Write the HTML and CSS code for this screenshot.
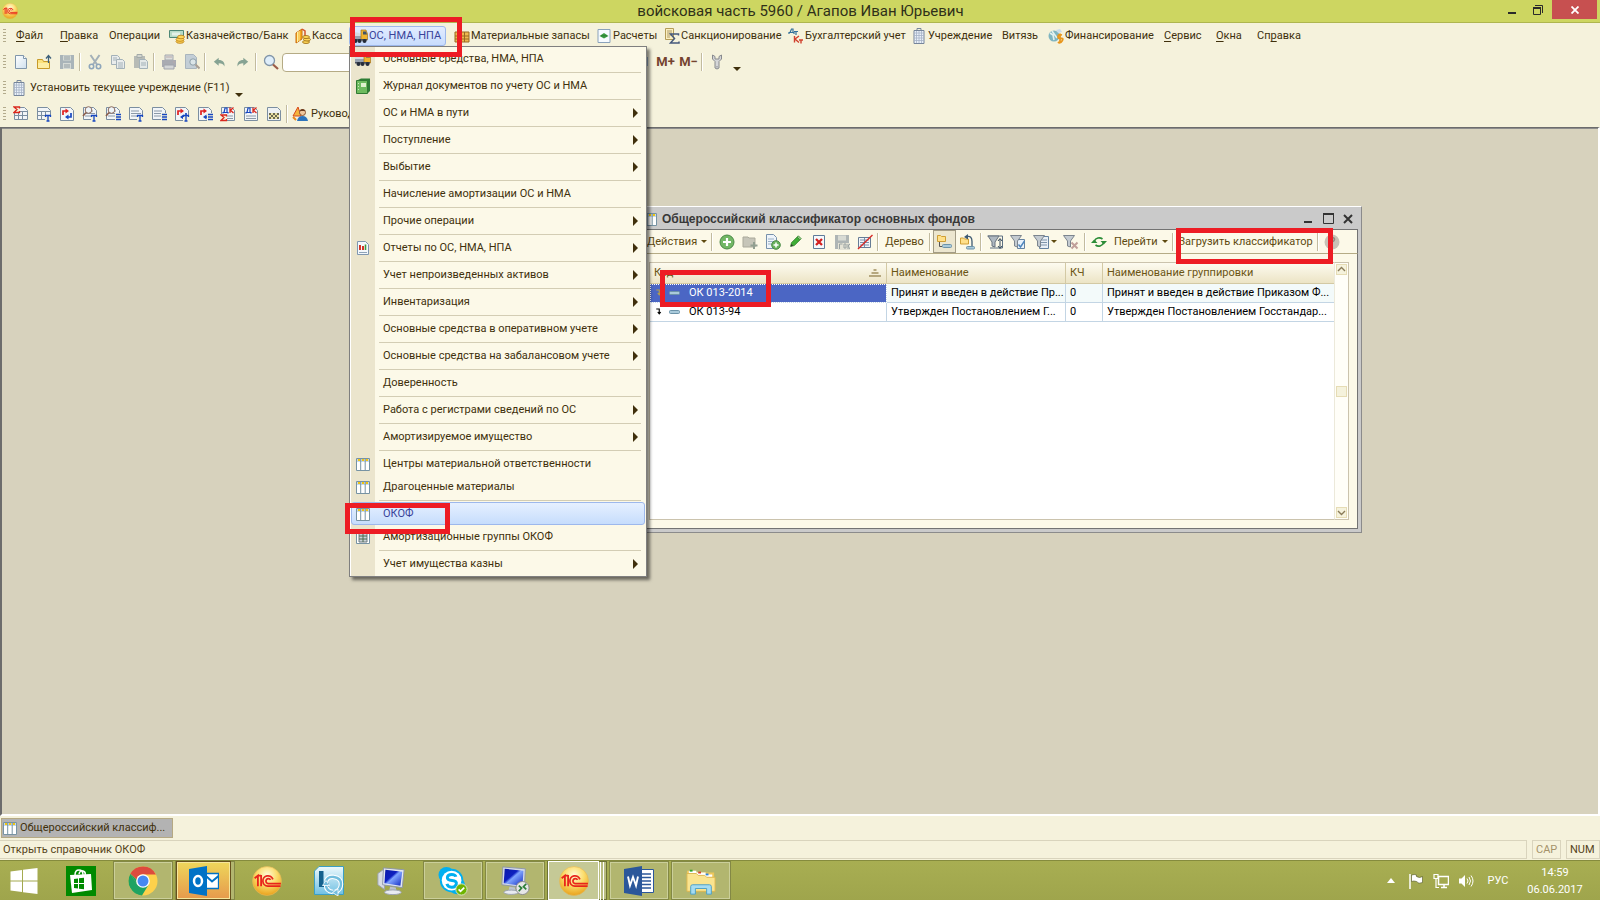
FILE: index.html
```html
<!DOCTYPE html>
<html lang="ru">
<head>
<meta charset="utf-8">
<title>войсковая часть 5960 / Агапов Иван Юрьевич</title>
<link rel="stylesheet" href="styles.css">
</head>
<body>
<svg class="sprite" aria-hidden="true">
  <defs>
    <radialGradient id="gold" cx=".5" cy=".3" r=".7"><stop offset="0" stop-color="#fffbd8"/><stop offset=".5" stop-color="#fbdc6a"/><stop offset="1" stop-color="#e9a21c"/></radialGradient>
    <linearGradient id="screen" x1="0" y1="0" x2="1" y2="1"><stop offset="0" stop-color="#0a1aa8"/><stop offset=".4" stop-color="#0d1fc0"/><stop offset=".5" stop-color="#7fa4ff"/><stop offset="1" stop-color="#1028c0"/></linearGradient>
    <linearGradient id="paper" x1="0" y1="0" x2="1" y2="1"><stop offset="0" stop-color="#fff"/><stop offset="1" stop-color="#cfe0ee"/></linearGradient>
    <linearGradient id="lyncbg" x1="0" y1="0" x2="0" y2="1"><stop offset="0" stop-color="#eef9fd"/><stop offset="1" stop-color="#6fc0e2"/></linearGradient>
  </defs>
  <symbol id="onec" viewBox="0 0 28 28"><circle cx="14" cy="14" r="13.5" fill="url(#gold)" stroke="#e3b95a" stroke-width=".6"/><path d="M2.500 11.500l3-2.500v10M8.500 8.500v10.500M5.500 9h3" fill="none" stroke="#e8251c" stroke-width="1.700"/><path d="M19.500 12.500a4.800 4.800 0 1 0-4.800 6.300h12M17.300 13a2.300 2.300 0 1 0-2.300 3.400h12" fill="none" stroke="#e8251c" stroke-width="1.600"/></symbol>
  <symbol id="new" viewBox="0 0 16 16"><path d="M2.500 1.500h8l3 3v10h-11z" fill="url(#paper)" stroke="#8096ab"/><path d="M10.500 1.500v3h3" fill="#fff" stroke="#8096ab"/></symbol>
  <symbol id="open" viewBox="0 0 16 16"><path d="M1.500 14.500v-9h5l1 2h6v7z" fill="#fbe27c" stroke="#c79a2a"/><path d="M2 9h11v5H2z" fill="#fdeea4"/><path d="M12.500 9V2M10 4.500L12.500 1.500 15 4.500" fill="none" stroke="#3d607b" stroke-width="1.300"/></symbol>
  <symbol id="save" viewBox="0 0 16 16"><path d="M1 1h14v14H1z" fill="#a9b4b9"/><path d="M4 1.500h8v5H4zM4 9h8v6H4z" fill="#d5dad6"/><path d="M5 3h6M5 5h6M5 11h6M5 13h6" stroke="#929da3"/></symbol>
  <symbol id="saveok" viewBox="0 0 16 16"><path d="M1 1h14v14H1z" fill="#aeb5b5"/><path d="M4 1.500h8v5H4z" fill="#d8dbd4"/><path d="M4 9h12v7H4z" fill="#e4e3d6"/><path d="M5.500 15V10h3M10 10h2v4h-2zM14 10v5M16 10l-2 2 2 3" fill="none" stroke="#9aa3a3"/></symbol>
  <symbol id="cut" viewBox="0 0 16 16"><path d="M3.500 1l6.500 9.500M12.500 1L6 10.500" stroke="#a3b0b8" stroke-width="2"/><circle cx="4.500" cy="12.500" r="2.200" fill="none" stroke="#8ea6bb" stroke-width="1.600"/><circle cx="11.500" cy="12.500" r="2.200" fill="none" stroke="#8ea6bb" stroke-width="1.600"/></symbol>
  <symbol id="copy" viewBox="0 0 16 16"><g fill="#e9ecec" stroke="#a3b1b8"><path d="M1.500 1.500h6l2 2v7h-8z"/><path d="M6.500 5.500h6l2 2v7h-8z"/></g><path d="M3 4h4M3 6h3M8 9h5M8 11h5M8 13h5" stroke="#a3b1b8"/></symbol>
  <symbol id="paste" viewBox="0 0 16 16"><path d="M1 2h11v12H1z" fill="#b7bbb6"/><path d="M4 .500h5v3H4z" fill="#d2d5cf" stroke="#a3aaa9"/><path d="M6.500 5.500h6l2 2v7h-8z" fill="#e3e8e8" stroke="#a3b1b8"/><path d="M8 9h5M8 11h5" stroke="#a3b1b8"/></symbol>
  <symbol id="print" viewBox="0 0 16 16"><path d="M4 1h8v5H4z" fill="#dcdedc" stroke="#a4a8ae"/><path d="M1 6h14v7H1z" fill="#a9abb2"/><path d="M3 11h10v4H3z" fill="#d3d5d6" stroke="#a0a3ab"/><path d="M5 3h6M12 8h2" stroke="#b9a9aa"/></symbol>
  <symbol id="preview" viewBox="0 0 16 16"><path d="M1.500 .500h8l3 3v11h-11z" fill="#c3ced6" stroke="#a9b5bd"/><circle cx="9" cy="8" r="3.200" fill="#dbe5e8" stroke="#8fa0aa"/><path d="M11.500 10.500l4 4" stroke="#aa9f93" stroke-width="2"/></symbol>
  <symbol id="undo" viewBox="0 0 16 16"><path d="M1 7l6-5v3c5 0 8 3 7 8-1-3-3-4-7-4v3z" fill="#86a393"/></symbol>
  <symbol id="redo" viewBox="0 0 16 16"><path d="M15 7L9 2v3C4 5 1 8 2 13c1-3 3-4 7-4v3z" fill="#86a393"/></symbol>
  <symbol id="find" viewBox="0 0 16 16"><circle cx="6.500" cy="6.500" r="5" fill="#dfeefa" stroke="#8195a8" stroke-width="1.300"/><path d="M10 10.500l5 4.500" stroke="#9b5c48" stroke-width="2.200"/></symbol>
  <symbol id="wrench" viewBox="0 0 16 16"><path d="M3.500 1v4l2.500 2.500V14q2 2 4 0V7.500L12.500 5V1L10 2.500V5H6V2.500z" fill="#d5d6d8" stroke="#888a8e"/><path d="M8 12v1.500" stroke="#888a8e"/></symbol>
  <symbol id="building" viewBox="0 0 16 16"><path d="M3 2.500h10v13H3z" fill="#e9f0f8" stroke="#76859b"/><path d="M6 2.500v-2h4v2" fill="none" stroke="#76859b"/><path d="M3 5h10M3 7.500h10M3 10h10M3 12.500h10M5.500 3v12M8 3v12M10.500 3v12" stroke="#a6b3c7" stroke-width=".8"/></symbol>
  <symbol id="sheet" viewBox="0 0 16 16"><path d="M1.500 1.500h10l3 3v9h-13z" fill="#f2f5f8" stroke="#7b8ea1"/><path d="M3 5h8M3 7.500h10M3 10h10" stroke="#8b99a8"/></symbol>
  <symbol id="gridsheet" viewBox="0 0 16 16"><path d="M1.500 1.500h10l3 3v9h-13z" fill="#f2f5f8" stroke="#7b8ea1"/><path d="M2 5.500h12M2 9.500h12M5.500 5v8M9.500 5v8" stroke="#7b8ea1"/></symbol>
  <symbol id="tmark" viewBox="0 0 16 16"><path d="M9 9h7v7H9z" fill="#f5f2dc"/><path d="M9 9.500h6M12 9v6M10.500 15h3M9.500 9v2M14.500 9v2" stroke="#1747c0" stroke-width="1.300"/></symbol>
  <symbol id="lmark" viewBox="0 0 16 16"><path d="M10 7h6v9h-6z" fill="#f5f2dc"/><path d="M11 8.500h5M11 11h5M11 13.500h5" stroke="#1747c0" stroke-width="1.300"/></symbol>
  <symbol id="rep1" viewBox="0 0 16 16"><use href="#gridsheet"/><path d="M0 0h7v7H0z" fill="#f5f2dc"/><path d="M6.500 2.500V1H1l3 2.500L1 6.500h5.500V5" fill="none" stroke="#d9281e" stroke-width="1.300"/></symbol>
  <symbol id="rep2" viewBox="0 0 16 16"><use href="#gridsheet"/><use href="#tmark"/></symbol>
  <symbol id="rep3" viewBox="0 0 16 16"><path d="M1.500 1.500h10l3 3v10h-13z" fill="#f2f5f8" stroke="#7b8ea1"/><path d="M4 9V5h3" fill="none" stroke="#e02020" stroke-width="1.700"/><path d="M6.500 2.500L10 5 6.500 7.500z" fill="#e02020"/><path d="M12 7v4H9" fill="none" stroke="#1747c0" stroke-width="1.700"/><path d="M9.500 8.500L6 11l3.500 2.500z" fill="#1747c0"/></symbol>
  <symbol id="rep4" viewBox="0 0 16 16"><use href="#sheet"/><circle cx="6.500" cy="4" r="3.300" fill="#eef4f8" stroke="#8b6a5c"/><path d="M4 6.500L1 10" stroke="#8b5c48" stroke-width="1.600"/><use href="#tmark"/></symbol>
  <symbol id="rep5" viewBox="0 0 16 16"><use href="#sheet"/><circle cx="6.500" cy="4" r="3.300" fill="#eef4f8" stroke="#8b6a5c"/><path d="M4 6.500L1 10" stroke="#8b5c48" stroke-width="1.600"/><use href="#lmark"/></symbol>
  <symbol id="rep6" viewBox="0 0 16 16"><use href="#sheet"/><use href="#tmark"/></symbol>
  <symbol id="rep7" viewBox="0 0 16 16"><use href="#sheet"/><use href="#lmark"/></symbol>
  <symbol id="rep8" viewBox="0 0 16 16"><use href="#rep3"/><use href="#tmark"/></symbol>
  <symbol id="rep9" viewBox="0 0 16 16"><use href="#rep3"/><use href="#lmark"/></symbol>
  <symbol id="dk" viewBox="0 0 16 16"><path d="M1.500 1.500h10l3 3v10h-13z" fill="#f2f5f8" stroke="#7b8ea1"/><path d="M3 10h10M3 12.500h10" stroke="#8b99a8"/><path d="M3 7.500V6.500h5v1M4 6.500L5 2h2v4.500" fill="none" stroke="#1747c0" stroke-width="1.200"/><path d="M10 1.500v5.500M13.500 1.500L10.500 4.300 13.500 7" fill="none" stroke="#d9281e" stroke-width="1.300"/></symbol>
  <symbol id="dksum" viewBox="0 0 16 16"><use href="#dk"/><path d="M0 8h7v8H0z" fill="#f5f2dc"/><path d="M6.500 10.500V9H1l3 2.500-3 3h5.500V13" fill="none" stroke="#d9281e" stroke-width="1.300"/></symbol>
  <symbol id="chess" viewBox="0 0 16 16"><path d="M1.500 1.500h10l3 3v10h-13z" fill="#eef1f3" stroke="#7b8ea1"/><path d="M3 7h10v6H3z" fill="#e9dfa0"/><path d="M3 7h2v2H3zM7 7h2v2H7zM11 7h2v2h-2zM5 9h2v2H5zM9 9h2v2H9zM3 11h2v2H3zM7 11h2v2H7zM11 11h2v2h-2z" fill="#6c6a52"/></symbol>
  <symbol id="guide" viewBox="0 0 16 16"><path d="M1 10L6 1l3 9z" fill="#f4b43c" stroke="#d8481d"/><circle cx="10.500" cy="6.500" r="3" fill="#f2c79c" stroke="#8a5430"/><path d="M7.500 5q3-4 6 0z" fill="#6c3b1d"/><path d="M5 15q1-5 5.500-5t5.500 5z" fill="#2d74bd"/><path d="M1 11l3 3" stroke="#e88a1c" stroke-width="2"/></symbol>
  <symbol id="bank" viewBox="0 0 16 16"><path d="M.500 2.500h14v7H.500z" fill="#b8dbc8" stroke="#4e8876"/><path d="M3 4.500h8v3H3z" fill="#e4f2e8"/><g fill="#ffd75a" stroke="#b87a12" stroke-width=".8"><ellipse cx="11" cy="13.500" rx="4" ry="1.800"/><ellipse cx="11" cy="11.500" rx="4" ry="1.800"/><ellipse cx="12" cy="9" rx="3.500" ry="1.800"/></g></symbol>
  <symbol id="cash" viewBox="0 0 16 16"><path d="M1 5l6-4v10l-6 4z" fill="#f6a91c" stroke="#c96c10"/><path d="M4 3v10M2.500 4v10" stroke="#fff0a0"/><path d="M7 1l3 2v6" fill="none" stroke="#d4542a" stroke-width="1.500"/><g fill="#ffd75a" stroke="#96660f" stroke-width=".8"><ellipse cx="11" cy="14" rx="3.500" ry="1.500"/><ellipse cx="12" cy="11.500" rx="3.500" ry="1.500"/><ellipse cx="11" cy="9" rx="3.500" ry="1.500"/></g></symbol>
  <symbol id="truck" viewBox="0 0 16 16"><path d="M0 6h9v5H0z" fill="#98a2b0"/><path d="M0 5q4-2 9 1v2H0z" fill="#d3dae2"/><path d="M9 2h5l1.500 4v6H9z" fill="#efb330" stroke="#a8741a" stroke-width=".7"/><path d="M11 3.500h3l1 3h-4z" fill="#41536a"/><path d="M0 11h15v1.500H0z" fill="#4b5160"/><g fill="#252c3a"><circle cx="3.500" cy="13" r="2"/><circle cx="7.500" cy="13" r="2"/><circle cx="12.500" cy="13" r="2"/></g></symbol>
  <symbol id="boxes" viewBox="0 0 16 16"><path d="M1 4h14v10H1z" fill="#edb850" stroke="#9b6820"/><path d="M1 8h14M1 11h14M5.500 4v10M10.500 4v10" stroke="#9b6820"/></symbol>
  <symbol id="settle" viewBox="0 0 16 16"><path d="M2 1.500h12v13H2z" fill="#f7fbff" stroke="#8aa2bb"/><path d="M3.500 8L8 5l4.500 3L8 10.500z" fill="#3a9d42"/><path d="M5 7.800h6" stroke="#2c7d36"/></symbol>
  <symbol id="sanction" viewBox="0 0 16 16"><path d="M1.500 .500h8v11h-8z" fill="#fbefbf" stroke="#b49c57"/><path d="M3 3h5M3 5h5M3 7h5M3 9h3" stroke="#ad9a6a"/><path d="M14.500 7.500V6H6.500l4 4.500-4 4.500h8.500V13.500" fill="none" stroke="#46597c" stroke-width="1.500"/></symbol>
  <symbol id="ledger" viewBox="0 0 16 16"><path d="M1 6V4.500h5V6M2 4.500L3.500 1h1.500v3.500M6 3.500h4M8 3.500v3.500" fill="none" stroke="#31709a" stroke-width="1.200"/><path d="M6.500 8v6.500M11 8l-4 3 4 3.500M11 12h4M13 12v3.500" fill="none" stroke="#d1402c" stroke-width="1.400"/></symbol>
  <symbol id="finance" viewBox="0 0 16 16"><circle cx="6" cy="8" r="5.500" fill="#7fb5c0"/><path d="M2 5l3 2 1 5M4 3l5 7" stroke="#e2f1ef" stroke-width="1.600" fill="none"/><path d="M8 2l4-1 2 3-4 1z" fill="#c8dceb"/><path d="M14 7q-4-1-4 1.500t3 2 1 2.500-4 1M12 5.500v10" fill="none" stroke="#e8961c" stroke-width="1.800"/></symbol>
  <symbol id="book" viewBox="0 0 16 16"><path d="M3 2l3-1.500h9V13l-2 2z" fill="#2d7d35"/><path d="M1.500 2.500h11v13h-11z" fill="#6dbb5f" stroke="#2f7a33"/><path d="M6 5h5v4H6z" fill="#dff2cf"/><path d="M3.500 5v9" stroke="#c9ebc0" stroke-dasharray="1 2"/></symbol>
  <symbol id="chart" viewBox="0 0 16 16"><path d="M2.500 1.500h8l3 3v10h-11z" fill="#f4f8fc" stroke="#7f97b0"/><path d="M5 5v5" stroke="#d53427" stroke-width="2"/><path d="M8 6v4" stroke="#d53427" stroke-width="2"/><path d="M10.500 4.500V10" stroke="#3f9b3f" stroke-width="1.600"/><path d="M4 12.500h8" stroke="#8fa3b8"/></symbol>
  <symbol id="table" viewBox="0 0 16 16"><path d="M1.500 2.500h13v12h-13z" fill="#fff" stroke="#7793a3"/><path d="M2 3h12v3H2z" fill="#c6d9ea"/><path d="M3 4h2M7 4h2M11 4h2" stroke="#f1c40f" stroke-width="2"/><path d="M5.700 3v12M10.200 3v12" stroke="#7793a3"/></symbol>
  <symbol id="groups" viewBox="0 0 16 16"><path d="M1.500 1.500h13v13h-13z" fill="#fff" stroke="#7793a3"/><path d="M4 4h8v9H4z" fill="#c9d2d6" stroke="#6d7b80"/><path d="M4 7h8M4 10h8M8 4v9" stroke="#4d6a50"/></symbol>
  <symbol id="add" viewBox="0 0 16 16"><circle cx="8" cy="8" r="7" fill="#72b765" stroke="#4b8a47"/><path d="M8 4v8M4 8h8" stroke="#fff" stroke-width="2.200"/></symbol>
  <symbol id="addfolder" viewBox="0 0 16 16"><path d="M1 3h5l1 1h6v9H1z" fill="#c6c5b9" stroke="#aaa99b"/><path d="M12 8v7M8.500 11.500h7" stroke="#929f91" stroke-width="2"/></symbol>
  <symbol id="addcopy" viewBox="0 0 16 16"><path d="M1.500 .500h7l3 3v11h-10z" fill="#eef4fa" stroke="#7791ab"/><path d="M3 5h6M3 7.500h6M3 10h4" stroke="#9ab0c5"/><circle cx="11" cy="11" r="4.300" fill="#69b25c" stroke="#4b8a47"/><path d="M11 8.500v5M8.500 11h5" stroke="#fff" stroke-width="1.500"/></symbol>
  <symbol id="pencil" viewBox="0 0 16 16"><path d="M2 14l1-4.500L10 2.500l3.500 3.500L6.500 13z" fill="#3fae35" stroke="#2c7f29"/><path d="M10 2.500L11.500 1 15 4.500 13.500 6z" fill="#9fcf8f" stroke="#2c7f29"/><path d="M2 14l1-3 2 2z" fill="#333"/></symbol>
  <symbol id="delete" viewBox="0 0 16 16"><path d="M2.500 1.500h11v13h-11z" fill="#f6f9fc" stroke="#5f7b99"/><path d="M5 5l6 6M11 5l-6 6" stroke="#d3201f" stroke-width="2.300"/></symbol>
  <symbol id="strike" viewBox="0 0 16 16"><path d="M1.500 3.500h12v10h-12z" fill="#f3f6f9" stroke="#667c95"/><path d="M3 6h9M3 8.500h9M3 11h9M7.500 4v9" stroke="#7b90a8"/><path d="M1 15L15.500 1" stroke="#d92b27" stroke-width="1.400"/></symbol>
  <symbol id="hier" viewBox="0 0 16 16"><path d="M1.500 1.500h3l1 1h4v5h-8z" fill="#ffe08a" stroke="#cf9f35"/><path d="M3.500 8v4.500H6" fill="none" stroke="#555"/><rect x="6.500" y="10.500" width="9" height="3" rx="1" fill="#a9cadb" stroke="#6c93a9"/></symbol>
  <symbol id="moveup" viewBox="0 0 16 16"><path d="M1.500 4h3l1 1h4v5h-8z" fill="#ffe08a" stroke="#cf9f35"/><path d="M8 2.500q5-1 5 5V12" fill="none" stroke="#3e5a72" stroke-width="1.300"/><path d="M9 0L5 3l4 2.500z" fill="#3e5a72"/><rect x="7.500" y="12.500" width="8" height="2.500" rx="1" fill="#a9cadb" stroke="#6c93a9"/></symbol>
  <symbol id="funnel" viewBox="0 0 16 16"><path d="M.500 1.500h11L7.500 7v6l-3-1V7z" fill="#c4cbd1" stroke="#7c858e"/></symbol>
  <symbol id="filt1" viewBox="0 0 16 16"><path d="M.500 2h15v12H3" fill="none" stroke="#5e7183"/><path d="M1 2h11L8 8v5l-3-1V8z" fill="#aeb8c1" stroke="#68737e"/><path d="M13 5v9M11 7l2-2.500L15 7M11 12l2 2.500L15 12" fill="none" stroke="#35495c"/></symbol>
  <symbol id="filt2" viewBox="0 0 16 16"><path d="M7.500 5.500h7v9h-7z" fill="#e8f1fb" stroke="#6683a0"/><use href="#funnel"/><path d="M8.500 10.500l2 2.500 4-6" fill="none" stroke="#4d86bd" stroke-width="1.400"/></symbol>
  <symbol id="filt3" viewBox="0 0 16 16"><path d="M6.500 2.500h9v12h-9z" fill="#eaf0f6" stroke="#6683a0"/><path d="M8 6h6M8 8.500h6M8 11h6" stroke="#7e94aa"/><use href="#funnel"/></symbol>
  <symbol id="filt4" viewBox="0 0 16 16"><use href="#funnel"/><path d="M8.500 8.500l6 6M14.500 8.500l-6 6" stroke="#c1a09a" stroke-width="2"/></symbol>
  <symbol id="refresh" viewBox="0 0 16 16"><path d="M3.500 7a5 4.500 0 0 1 8-2M12.500 9a5 4.500 0 0 1-8 2" fill="none" stroke="#2b8c37" stroke-width="1.600"/><path d="M9.500 7h6.500l-3.200 3.500zM0 9h6.500L3.200 5.500z" fill="#2b8c37"/></symbol>
  <symbol id="help" viewBox="0 0 16 16"><circle cx="8" cy="8" r="7.500" fill="#c8c2b6"/><path d="M5.500 6q0-2.500 2.500-2.500t2.500 2q0 1.500-2.500 2.500v1.500M8 11v1.800" fill="none" stroke="#918a7e" stroke-width="1.600"/></symbol>
  <symbol id="level" viewBox="0 0 16 16"><path d="M3 4h4v6M5 8l2 2.500L9 8" fill="none" stroke="currentColor" stroke-width="1.500"/></symbol>
  <symbol id="item" viewBox="0 0 12 6"><rect x=".5" y="1.500" width="10" height="3" rx="1" fill="#a9cadb" stroke="#6c93a9"/></symbol>
  <symbol id="up" viewBox="0 0 11 11"><path d="M2 7l3.500-3.500L9 7" fill="none" stroke="#8a7b58" stroke-width="1.400"/></symbol>
  <symbol id="down" viewBox="0 0 11 11"><path d="M2 4l3.500 3.500L9 4" fill="none" stroke="#8a7b58" stroke-width="1.400"/></symbol>
  <symbol id="sort" viewBox="0 0 12 8"><path d="M4.500 0h3v2h-3zM2.500 3h7v2h-7zM0 6h12v2H0z" fill="#b5a77e"/></symbol>
  <symbol id="win" viewBox="0 0 28 28"><path d="M.500 4.500L12 3v10.500H.500zM13 2.800L27.500 1v12.500H13zM.500 14.500H12V25L.500 23.500zM13 14.500h14.500V27L13 25.200z" fill="#fff"/></symbol>
  <symbol id="store" viewBox="0 0 30 30"><path d="M0 0h30v30H0z" fill="#008a00"/><path d="M4 9l21 -1 1 16-20 3z" fill="#fff"/><path d="M9 9q0-5 4-5t4 5M13 8q1-4 4-3 3 1 2 4" fill="none" stroke="#fff" stroke-width="1.500"/><path d="M8 13l4-.500V17H8zM13 12.300l5-.600V17h-5zM8 18h4v4.500L8 22zM13 18h5v5.300l-5-.600z" fill="#008a00"/></symbol>
  <symbol id="chrome" viewBox="0 0 30 30"><circle cx="15" cy="15" r="14.500" fill="#fdd14b"/><path d="M2.400 7.800A14.500 14.500 0 0 0 14 29.500L21 18 15 15l-6 3z" fill="#1ea362"/><path d="M2.400 7.800A14.500 14.500 0 0 1 27.900 8.500H15q-5 0-6.500 5z" fill="#dd4b3e"/><path d="M2.400 7.800L9 18.500l-.500-5z" fill="#1ea362"/><circle cx="15" cy="15" r="6.800" fill="#fff"/><circle cx="15" cy="15" r="5.500" fill="#4688f1"/></symbol>
  <symbol id="outlook" viewBox="0 0 30 30"><path d="M16.500 7.500h13v15h-13z" fill="#fff" stroke="#0072c6" stroke-width="1.300"/><path d="M17 10l6 5.500 6.500-5.500" fill="none" stroke="#0072c6" stroke-width="2"/><path d="M0 3l18-3v30L0 27z" fill="#0072c6"/><ellipse cx="9" cy="15" rx="4" ry="5" fill="none" stroke="#fff" stroke-width="2.500"/></symbol>
  <symbol id="lync" viewBox="0 0 30 30"><path d="M5 .500h24.500v28H.500V5z" fill="url(#lyncbg)" stroke="#3b9fc4"/><path d="M5 5h4.500v12H15v4H5z" fill="#15618d"/><path d="M12 15q2-5 8-4 7 1 7 7t-6 8M12 19q0 6 7 7" fill="none" stroke="#fff" stroke-width="4.500"/><path d="M12 15q2-5 8-4 7 1 7 7t-6 8M12 19q0 6 7 7" fill="none" stroke="#72bddd" stroke-width="2.400"/><path d="M8.500 19.500l3.500-5 3.500 5zM24 23l-5.500 3.500L24 30z" fill="#72bddd" stroke="#fff" stroke-width=".8"/></symbol>
  <symbol id="pc" viewBox="0 0 32 30"><path d="M2 7l7-5v22l-7-5z" fill="#d9dde4" stroke="#9aa1ad"/><path d="M8 1l22 2-2 19-21-3z" fill="#e3e7f0" stroke="#8c95a8"/><path d="M10 3l18 2-2 15-17-2.500z" fill="url(#screen)"/><path d="M15 21l6 1 1 4h-8z" fill="#bdc3cf"/><ellipse cx="18" cy="27" rx="9" ry="2.500" fill="#e8ebf0" stroke="#9aa1ad"/></symbol>
  <symbol id="rdp" viewBox="0 0 32 30"><path d="M3 0l24 2-1 20-24-3z" fill="#d6dcea" stroke="#8c95a8"/><path d="M5 2l20 2-1 16-20-2.500z" fill="url(#screen)"/><path d="M10 21l6 1 1 4H9z" fill="#bdc3cf"/><ellipse cx="12" cy="27" rx="8" ry="2.300" fill="#e8ebf0" stroke="#9aa1ad"/><circle cx="24" cy="22.500" r="7" fill="#e6e6e6" stroke="#8a8a8a"/><path d="M20 20l3 2.500-3 3.500M28 18l-3 3 3 3" fill="none" stroke="#2d7f3a" stroke-width="1.800"/></symbol>
  <symbol id="skype" viewBox="0 0 32 30"><circle cx="9" cy="8.500" r="8.500" fill="#00aff0"/><circle cx="20" cy="20" r="9" fill="#00aff0"/><circle cx="14.500" cy="14.500" r="12.500" fill="#00aff0"/><circle cx="14.500" cy="14.500" r="10.500" fill="#fff"/><path d="M19 10.500Q18.500 8 14.500 8T10 11t5 3.500 4.500 4-5 3.200T9.500 18" fill="none" stroke="#00aff0" stroke-width="3.200"/><circle cx="25" cy="24" r="6" fill="#6fb400" stroke="#dbe8c4"/><path d="M22 24l2 2 4-4" fill="none" stroke="#fff" stroke-width="1.800"/></symbol>
  <symbol id="word" viewBox="0 0 30 30"><path d="M17 3.500h12.500v23H17z" fill="#fff" stroke="#2b579a"/><path d="M18 8h9M18 11.500h9M18 15h9M18 18.500h9M18 22h9" stroke="#2b579a" stroke-width="1.400"/><path d="M0 3l18-3v30L0 27z" fill="#2b579a"/><path d="M4 10.500l2 9 3-8.500 3 8.500 2-9" fill="none" stroke="#fff" stroke-width="1.900"/></symbol>
  <symbol id="explorer" viewBox="0 0 32 30"><path d="M1 26V4h9l2 2h18v20z" fill="#eec75b"/><path d="M3 4h8v3H3zM11 6h10v3H11zM19 8h9v3h-9z" fill="#fff"/><path d="M4 3h3v2H4z" fill="#2aa52a"/><path d="M13 5h3v2h-3z" fill="#d9402c"/><path d="M21 7h3v2h-3z" fill="#2c82d9"/><path d="M1 7h10l2 2h7l2 2h9v15H1z" fill="#fae48f" stroke="#ddb64f"/><path d="M5 29V21q0-2 2-2h18q2 0 2 2v8h-5v-6H10v6z" fill="#a5dcf2" stroke="#4b9fc4"/></symbol>
  <symbol id="flag" viewBox="0 0 16 16"><path d="M2 1v15" stroke="#fff" stroke-width="1.500"/><path d="M3.500 2q3-1 5 0v1.500q3 2 6 0v6q-4 2-6-1-3-1-5 0z" fill="#fff" stroke="#4d5322" stroke-width=".6"/></symbol>
  <symbol id="net" viewBox="0 0 16 16"><path d="M5.500 3.500h10v8h-10zM8 14.500h6M11 12v2" fill="none" stroke="#fff" stroke-width="1.500"/><path d="M1 1.500h4v4H1zM3 5.500v9h3" fill="none" stroke="#fff" stroke-width="1.200"/></symbol>
  <symbol id="vol" viewBox="0 0 16 16"><path d="M1 5.500h2.500L7 2v12L3.500 10.500H1z" fill="#fff"/><path d="M9 5.500q2 2.500 0 5M11 4q3 4 0 8M13 2.500q4 5.500 0 11" fill="none" stroke="#fff"/></symbol>
</svg>

<div class="app">
  <header class="titlebar">
    <svg class="titlebar-logo"><use href="#onec"/></svg>
    <h1 class="titlebar-text">войсковая часть 5960 / Агапов Иван Юрьевич</h1>
    <div class="titlebar-buttons">
      <button class="win-btn" aria-label="Свернуть"><svg width="10" height="10"><path d="M1 8h8" stroke="#2a2a2a" stroke-width="2"/></svg></button>
      <button class="win-btn" aria-label="Восстановить"><svg width="10" height="10"><path d="M.500 2.500h7v7h-7z" fill="none" stroke="#2a2a2a"/><path d="M0 3h8" stroke="#2a2a2a" stroke-width="2"/><path d="M2 .500h7.500V8" fill="none" stroke="#2a2a2a"/></svg></button>
      <button class="win-btn win-btn-close" aria-label="Закрыть"><svg width="8" height="8"><path d="M.500 .500l7 7M7.500 .500l-7 7" stroke="#fff" stroke-width="1.800"/></svg></button>
    </div>
  </header>

  <nav class="menubar" aria-label="Главное меню">
    <span class="grip"></span>
    <button class="menu"><span><u>Ф</u>айл</span></button>
    <button class="menu"><span><u>П</u>равка</span></button>
    <button class="menu">Операции</button>
    <button class="menu"><svg class="ico"><use href="#bank"/></svg>Казначейство/Банк</button>
    <button class="menu"><svg class="ico"><use href="#cash"/></svg>Касса</button>
    <button class="menu menu-open"><svg class="ico"><use href="#truck"/></svg>ОС, НМА, НПА</button>
    <button class="menu"><svg class="ico"><use href="#boxes"/></svg>Материальные запасы</button>
    <button class="menu"><svg class="ico"><use href="#settle"/></svg>Расчеты</button>
    <button class="menu"><svg class="ico"><use href="#sanction"/></svg>Санкционирование</button>
    <button class="menu"><svg class="ico"><use href="#ledger"/></svg>Бухгалтерский учет</button>
    <button class="menu"><svg class="ico"><use href="#building"/></svg>Учреждение</button>
    <button class="menu">Витязь</button>
    <button class="menu"><svg class="ico"><use href="#finance"/></svg>Финансирование</button>
    <button class="menu"><span><u>С</u>ервис</span></button>
    <button class="menu"><span><u>О</u>кна</span></button>
    <button class="menu"><span>Сп<u>р</u>авка</span></button>
  </nav>

  <div class="toolbar">
    <span class="grip"></span>
    <button class="tool" aria-label="Новый"><svg class="ico"><use href="#new"/></svg></button>
    <button class="tool" aria-label="Открыть"><svg class="ico"><use href="#open"/></svg></button>
    <button class="tool" aria-label="Сохранить"><svg class="ico"><use href="#save"/></svg></button>
    <span class="sep"></span>
    <button class="tool" aria-label="Вырезать"><svg class="ico"><use href="#cut"/></svg></button>
    <button class="tool" aria-label="Копировать"><svg class="ico"><use href="#copy"/></svg></button>
    <button class="tool" aria-label="Вставить"><svg class="ico"><use href="#paste"/></svg></button>
    <span class="sep"></span>
    <button class="tool" aria-label="Печать"><svg class="ico"><use href="#print"/></svg></button>
    <button class="tool" aria-label="Просмотр"><svg class="ico"><use href="#preview"/></svg></button>
    <span class="sep"></span>
    <button class="tool" aria-label="Отменить"><svg class="ico ico-small"><use href="#undo"/></svg></button>
    <button class="tool" aria-label="Повторить"><svg class="ico ico-small"><use href="#redo"/></svg></button>
    <span class="sep"></span>
    <button class="tool" aria-label="Найти"><svg class="ico"><use href="#find"/></svg></button>
    <input class="search" type="text" aria-label="Поиск">
    <button class="tool memory">M</button>
    <button class="tool memory">M+</button>
    <button class="tool memory">M−</button>
    <span class="sep"></span>
    <button class="tool" aria-label="Настройка"><svg class="ico"><use href="#wrench"/></svg></button>
    <span class="more"></span>
  </div>

  <div class="toolbar">
    <span class="grip"></span>
    <button class="tool tool-text"><svg class="ico"><use href="#building"/></svg>Установить текущее учреждение (F11)</button>
    <span class="more"></span>
  </div>

  <div class="toolbar">
    <span class="grip"></span>
    <button class="tool" aria-label="Оборотно-сальдовая ведомость"><svg class="ico"><use href="#rep1"/></svg></button>
    <button class="tool" aria-label="Ведомость по счету"><svg class="ico"><use href="#rep2"/></svg></button>
    <button class="tool" aria-label="Обороты"><svg class="ico"><use href="#rep3"/></svg></button>
    <button class="tool" aria-label="Анализ счета"><svg class="ico"><use href="#rep4"/></svg></button>
    <button class="tool" aria-label="Анализ субконто"><svg class="ico"><use href="#rep5"/></svg></button>
    <button class="tool" aria-label="Карточка счета"><svg class="ico"><use href="#rep6"/></svg></button>
    <button class="tool" aria-label="Карточка субконто"><svg class="ico"><use href="#rep7"/></svg></button>
    <button class="tool" aria-label="Обороты счета"><svg class="ico"><use href="#rep8"/></svg></button>
    <button class="tool" aria-label="Обороты субконто"><svg class="ico"><use href="#rep9"/></svg></button>
    <button class="tool" aria-label="Сводные проводки"><svg class="ico"><use href="#dksum"/></svg></button>
    <button class="tool" aria-label="Отчет по проводкам"><svg class="ico"><use href="#dk"/></svg></button>
    <button class="tool" aria-label="Шахматная ведомость"><svg class="ico"><use href="#chess"/></svg></button>
    <span class="sep"></span>
    <button class="tool tool-text"><svg class="ico"><use href="#guide"/></svg>Руководителю</button>
  </div>

  <main class="desktop">
    <section class="window" aria-label="Общероссийский классификатор основных фондов">
      <div class="window-title">
        <svg class="ico"><use href="#table"/></svg>
        <h2 class="window-name">Общероссийский классификатор основных фондов</h2>
        <button class="mdi-btn" aria-label="Свернуть"><svg width="10" height="11"><path d="M1 9h8" stroke="#333" stroke-width="2"/></svg></button>
        <button class="mdi-btn" aria-label="Развернуть"><svg width="11" height="11"><path d="M.500 1h10v9.500H.500z" fill="none" stroke="#333"/><path d="M0 1h11" stroke="#333" stroke-width="2"/></svg></button>
        <button class="mdi-btn" aria-label="Закрыть"><svg width="10" height="10"><path d="M1 1l8 8M9 1L1 9" stroke="#333" stroke-width="2"/></svg></button>
      </div>
      <div class="window-toolbar">
        <button class="cmd">Действия<i class="caret"></i></button>
        <span class="sep"></span>
        <button class="tool" aria-label="Добавить"><svg class="ico"><use href="#add"/></svg></button>
        <button class="tool" aria-label="Новая группа"><svg class="ico"><use href="#addfolder"/></svg></button>
        <button class="tool" aria-label="Скопировать"><svg class="ico"><use href="#addcopy"/></svg></button>
        <button class="tool" aria-label="Изменить"><svg class="ico ico-small"><use href="#pencil"/></svg></button>
        <button class="tool" aria-label="Удалить"><svg class="ico"><use href="#delete"/></svg></button>
        <button class="tool" aria-label="Записать"><svg class="ico"><use href="#saveok"/></svg></button>
        <button class="tool" aria-label="Отказаться"><svg class="ico"><use href="#strike"/></svg></button>
        <span class="sep"></span>
        <button class="cmd cmd-wide">Дерево</button>
        <span class="sep"></span>
        <button class="tool tool-on" aria-label="Иерархия"><svg class="ico"><use href="#hier"/></svg></button>
        <button class="tool" aria-label="Переместить в группу"><svg class="ico"><use href="#moveup"/></svg></button>
        <span class="sep"></span>
        <button class="tool" aria-label="Отбор и сортировка"><svg class="ico"><use href="#filt1"/></svg></button>
        <button class="tool" aria-label="Отбор по значению"><svg class="ico"><use href="#filt2"/></svg></button>
        <button class="tool tool-drop" aria-label="История отборов"><svg class="ico"><use href="#filt3"/></svg><i class="caret"></i></button>
        <button class="tool" aria-label="Отключить отбор"><svg class="ico"><use href="#filt4"/></svg></button>
        <span class="sep"></span>
        <button class="tool" aria-label="Обновить"><svg class="ico"><use href="#refresh"/></svg></button>
        <button class="cmd">Перейти<i class="caret"></i></button>
        <span class="sep"></span>
        <button class="cmd">Загрузить классификатор</button>
        <span class="sep"></span>
        <button class="tool" aria-label="Справка"><svg class="ico"><use href="#help"/></svg></button>
        <span class="mark mark-load"></span>
      </div>
      <div class="list">
        <table class="grid">
          <thead>
            <tr><th><span class="th-code">Код<svg class="sort"><use href="#sort"/></svg></span></th><th>Наименование</th><th>КЧ</th><th>Наименование группировки</th></tr>
          </thead>
          <tbody>
            <tr class="row-on"><td><span class="code"><svg class="level"><use href="#level"/></svg><svg class="item"><use href="#item"/></svg>ОК 013-2014</span></td><td>Принят и введен в действие Пр...</td><td>0</td><td>Принят и введен в действие Приказом Ф...</td></tr>
            <tr><td><span class="code"><svg class="level"><use href="#level"/></svg><svg class="item"><use href="#item"/></svg>ОК 013-94</span></td><td>Утвержден Постановлением Г...</td><td>0</td><td>Утвержден Постановлением Госстандар...</td></tr>
          </tbody>
        </table>
        <div class="scroll">
          <button class="scroll-btn" aria-label="Вверх"><svg width="11" height="11"><use href="#up"/></svg></button>
          <span class="scroll-thumb"></span>
          <button class="scroll-btn" aria-label="Вниз"><svg width="11" height="11"><use href="#down"/></svg></button>
        </div>
        <span class="mark mark-code"></span>
      </div>
    </section>
  </main>

  <div class="tabs"><button class="tab"><svg class="ico"><use href="#table"/></svg>Общероссийский классиф...</button></div>

  <footer class="status">
    <span class="status-main">Открыть справочник ОКОФ</span>
    <span class="status-key status-off">CAP</span>
    <span class="status-key">NUM</span>
  </footer>

  <div class="taskbar">
    <button class="start" aria-label="Пуск"><svg width="28" height="28"><use href="#win"/></svg></button>
    <button class="task" aria-label="Магазин"><svg class="app-ico"><use href="#store"/></svg></button>
    <button class="task task-run" aria-label="Chrome"><svg class="app-ico"><use href="#chrome"/></svg></button>
    <button class="task task-alert" aria-label="Outlook"><span class="task-face"><svg class="app-ico"><use href="#outlook"/></svg></span></button>
    <button class="task" aria-label="1С"><svg class="app-ico"><use href="#onec"/></svg></button>
    <button class="task" aria-label="Lync"><svg class="app-ico"><use href="#lync"/></svg></button>
    <button class="task" aria-label="Компьютер"><svg class="app-ico"><use href="#pc"/></svg></button>
    <button class="task task-run" aria-label="Skype"><svg class="app-ico"><use href="#skype"/></svg></button>
    <button class="task task-run" aria-label="Удаленный рабочий стол"><svg class="app-ico"><use href="#rdp"/></svg></button>
    <button class="task task-active" aria-label="1С:Предприятие"><span class="task-face"><svg class="app-ico"><use href="#onec"/></svg></span><span class="task-edge"></span></button>
    <button class="task task-run" aria-label="Word"><svg class="app-ico"><use href="#word"/></svg></button>
    <button class="task task-run" aria-label="Проводник"><svg class="app-ico"><use href="#explorer"/></svg></button>
    <div class="tray">
      <button class="tray-btn" aria-label="Скрытые значки"><svg width="8" height="5"><path d="M0 5l4-5 4 5z" fill="#fff"/></svg></button>
      <button class="tray-btn" aria-label="Уведомления"><svg class="ico"><use href="#flag"/></svg></button>
      <button class="tray-btn" aria-label="Сеть"><svg class="ico"><use href="#net"/></svg></button>
      <button class="tray-btn" aria-label="Громкость"><svg class="ico"><use href="#vol"/></svg></button>
      <button class="lang">РУС</button>
      <div class="clock"><span>14:59</span><span>06.06.2017</span></div>
    </div>
  </div>

  <div class="popup" role="menu">
    <button class="entry"><svg class="ico"><use href="#truck"/></svg><span>Основные средства, НМА, НПА</span></button>
    <hr class="rule">
    <button class="entry"><svg class="ico"><use href="#book"/></svg><span>Журнал документов по учету ОС и НМА</span></button>
    <hr class="rule">
    <button class="entry entry-sub"><span>ОС и НМА в пути</span></button>
    <hr class="rule">
    <button class="entry entry-sub"><span>Поступление</span></button>
    <hr class="rule">
    <button class="entry entry-sub"><span>Выбытие</span></button>
    <hr class="rule">
    <button class="entry"><span>Начисление амортизации ОС и НМА</span></button>
    <hr class="rule">
    <button class="entry entry-sub"><span>Прочие операции</span></button>
    <hr class="rule">
    <button class="entry entry-sub"><svg class="ico"><use href="#chart"/></svg><span>Отчеты по ОС, НМА, НПА</span></button>
    <hr class="rule">
    <button class="entry entry-sub"><span>Учет непроизведенных активов</span></button>
    <hr class="rule">
    <button class="entry entry-sub"><span>Инвентаризация</span></button>
    <hr class="rule">
    <button class="entry entry-sub"><span>Основные средства в оперативном учете</span></button>
    <hr class="rule">
    <button class="entry entry-sub"><span>Основные средства на забалансовом учете</span></button>
    <hr class="rule">
    <button class="entry"><span>Доверенность</span></button>
    <hr class="rule">
    <button class="entry entry-sub"><span>Работа с регистрами сведений по ОС</span></button>
    <hr class="rule">
    <button class="entry entry-sub"><span>Амортизируемое имущество</span></button>
    <hr class="rule">
    <button class="entry"><svg class="ico"><use href="#table"/></svg><span>Центры материальной ответственности</span></button>
    <button class="entry"><svg class="ico"><use href="#table"/></svg><span>Драгоценные материалы</span></button>
    <hr class="rule">
    <button class="entry entry-on"><svg class="ico"><use href="#table"/></svg><span>ОКОФ</span></button>
    <button class="entry"><svg class="ico"><use href="#groups"/></svg><span>Амортизационные группы ОКОФ</span></button>
    <hr class="rule">
    <button class="entry entry-sub"><span>Учет имущества казны</span></button>
    <span class="mark mark-menu"></span>
    <span class="mark mark-okof"></span>
  </div>
</div>
</body>
</html>
```
FILE: styles.css
```css
:root {
  --cream: #f5f2dc;
  --ink: #40300c;
  --red: #ed1c24;
  --ui: Roboto, "Liberation Sans", sans-serif;
}
* { box-sizing: border-box; }
body { margin: 0; font: 11px/16px var(--ui); color: var(--ink); }
button { font: inherit; color: inherit; background: none; border: 0; padding: 0; margin: 0; white-space: nowrap; }
h1, h2 { margin: 0; font-weight: normal; }
svg { flex: none; display: block; }
.sprite { position: absolute; width: 0; height: 0; }
.app { position: relative; display: flex; flex-direction: column; min-height: 100vh; background: var(--cream); overflow: hidden; }
.ico { width: 16px; height: 16px; }
.ico-small { width: 13px; height: 13px; }

.titlebar { display: flex; align-items: center; height: 23px; background: #cdd661; border-bottom: 1px solid #aeb64f; }
.titlebar-logo { width: 16px; height: 16px; margin-left: 2px; }
.titlebar-text { flex: 1; padding-left: 84px; text-align: center; font: 15px/22px Roboto, "Noto Sans", sans-serif; color: #2f3019; }
.titlebar-buttons { display: flex; align-self: flex-start; margin-right: 3px; }
.win-btn { display: flex; align-items: center; justify-content: center; width: 26px; height: 19px; }
.win-btn-close { width: 45px; margin-left: 1px; background: #c75050; }

.grip { flex: none; width: 3px; height: 14px; margin-right: 3px; background: repeating-linear-gradient(#b3ab8c 0 1px, transparent 1px 3px); }
.menubar { display: grid; grid-template-columns: 13px 44px 49px 60px 126px 56px 103px 142px 68px 124px 123px 91px 46px 116px 52px 41px 60px; align-items: center; height: 26px; padding-left: 3px; }
.menu { display: flex; align-items: center; justify-self: start; height: 20px; gap: 1px; }
.menu u { text-underline-offset: 2px; }
.menu-open { padding: 0 4px 0 2px; margin-left: -2px; border: 1px solid #9db8ec; border-radius: 3px; background: linear-gradient(#e2ecff, #c8dcfd); color: #39439a; }

.toolbar { display: flex; align-items: center; height: 26px; padding-left: 3px; }
.tool { flex: none; display: flex; align-items: center; justify-content: center; width: 23px; height: 23px; }
.tool-text { width: auto; padding-left: 2px; gap: 3px; }
.tool-on { border: 1px solid #a39c86; background: #ece6cf; }
.tool-drop { width: 30px; gap: 2px; }
.sep { flex: none; width: 5px; height: 18px; background: linear-gradient(90deg, transparent 1px, #c2bb9f 1px 2px, #fff 2px 3px, transparent 3px); }
.search { flex: none; width: 349px; height: 19px; border: 1px solid #b5ab85; border-radius: 4px; background: #fff; }
.memory { font-weight: bold; font-size: 13px; color: #74432f; }
.more { align-self: flex-end; margin: 0 0 4px 5px; border: 4px solid transparent; border-top-color: var(--ink); border-bottom: 0; }
.caret { border: 3px solid transparent; border-top-color: currentColor; border-bottom: 0; }

.desktop { position: relative; flex: 1; background: #d7d2bd; border: 2px solid #fff; border-top-color: #6c6c6c; border-left-color: #6c6c6c; border-top-width: 1px; box-shadow: inset 0 1px #8c8c8c; }
.window { position: absolute; left: 634px; top: 78px; width: 726px; height: 327px; display: flex; flex-direction: column; padding: 1px 3px 3px; background: #cacaca; border: 1px solid #8b8b8b; border-top-color: #fff; }
.window-title { display: flex; align-items: center; height: 21px; padding: 0 2px; gap: 4px; }
.window-name { flex: 1; font: bold 12px/16px "Liberation Sans", sans-serif; color: #383838; }
.mdi-btn { display: flex; justify-content: center; width: 16px; }
.window-toolbar { position: relative; display: flex; align-items: center; height: 25px; padding-left: 4px; background: #fcf9e8; border: 1px solid #737373; border-bottom-color: #b5ab85; border-left: 0; color: #5e4a10; }
.cmd { display: flex; align-items: center; gap: 4px; padding: 0 3px; }
.cmd-wide { padding: 0 4px; }
.list { position: relative; flex: 1; display: flex; padding: 8px; background: #fcf9e8; border: 1px solid #737373; border-top: 0; }
.grid { flex: 1; align-self: stretch; display: block; background: #fff; border: 1px solid #cbc3ad; border-right: 0; }
.grid thead, .grid tbody { display: block; }
.grid tr { display: grid; grid-template-columns: 237px 179px 37px 1fr; }
.grid th, .grid td { min-width: 0; padding: 0 2px 0 4px; overflow: hidden; white-space: nowrap; text-align: left; font-weight: normal; border-right: 1px solid #c3d5e4; border-bottom: 1px solid #c3d5e4; }
.grid th { line-height: 20px; color: #6b5514; background: linear-gradient(#fdfbf0, #ece4c5); border-color: #d3c9a4; }
.grid td { line-height: 18px; color: #000; }
.grid th:last-child, .grid td:last-child { border-right: 0; }
.th-code, .code { display: flex; align-items: center; }
.th-code { justify-content: space-between; padding-right: 3px; }
.sort { width: 12px; height: 8px; }
.level { width: 12px; height: 12px; color: #000; }
.item { width: 12px; height: 6px; margin: 0 8px 0 3px; }
.row-on td { background: #f3fafa; }
.row-on td:first-child { background: #4b66c4; color: #fff; outline: 1px dotted #fff; outline-offset: -1px; }
.row-on .level { color: #b59c4a; }
.scroll { display: flex; flex-direction: column; justify-content: space-between; align-items: center; width: 15px; padding: 1px; background: #fffef8; border: 1px solid #cbc3ad; border-left-color: #ece9da; }
.scroll-btn, .scroll-thumb { width: 11px; height: 11px; background: #f5f2dc; border: 1px solid #e6dcb4; }
.scroll-btn svg { margin: -1px; }

.tabs { display: flex; height: 24px; padding: 2px 1px; }
.tab { display: flex; align-items: center; gap: 2px; width: 172px; background: #b3b3b3; border: 1px solid #b5a983; }
.status { display: flex; gap: 5px; height: 20px; color: #55441a; }
.status span { border: 1px solid #d9d4bd; border-left-width: 0; line-height: 17px; padding: 0 3px; height: 19px; }
.status .status-main { flex: 1; }
.status .status-key { border-left-width: 1px; width: 29px; }
.status .status-key:last-child { width: 34px; }
.status .status-off { color: #a5926a; }

.taskbar { display: flex; gap: 2px; height: 40px; background: linear-gradient(#a8ae52, #9fa54c); border-top: 1px solid #858b3d; }
.start { display: flex; justify-content: flex-end; align-items: center; width: 49px; padding-right: 11px; }
.task { display: flex; align-items: center; justify-content: center; width: 60px; border: 1px solid transparent; }
.task-run { background: #b2b66f; border-color: #838845; box-shadow: inset 0 0 0 1px #cbcf9a; }
.task-face { display: flex; align-items: center; justify-content: center; width: 55px; height: 39px; }
.task-alert { justify-content: flex-start; background: #b2b66f; border-color: #838845; }
.task-alert .task-face { background: linear-gradient(#eed75b, #e6994c); border: 1px solid #66501c; box-shadow: inset 0 0 0 1px #f5e69b; }
.task-active { justify-content: flex-start; background: #b9bd80; border-color: #6d7238; }
.task-active .task-face { width: 51px; background: #c5c996; border: 1px solid #fff; }
.task-edge { width: 4px; height: 38px; border: 1px solid #fff; border-width: 0 1px; margin-left: 1px; }
.app-ico { width: 30px; height: 30px; }
.tray { display: flex; align-items: center; margin-left: auto; color: #fff; }
.tray-btn { display: flex; justify-content: center; width: 25px; }
.lang { width: 40px; text-align: center; }
.clock { display: flex; flex-direction: column; width: 74px; margin-right: 8px; text-align: center; line-height: 17px; }

.popup { position: absolute; left: 349px; top: 46px; width: 298px; padding: 0 1px 1px; background: linear-gradient(90deg, #fff 1px, #ebe5cd 1px 25px, #fcf9e8 25px); border: 1px solid #7f7f7f; box-shadow: 3px 3px 3px rgba(0, 0, 0, .5); }
.entry { display: grid; grid-template-columns: 16px 1fr 6px; column-gap: 12px; align-items: center; width: 100%; height: 23px; padding: 0 6px 0 4px; text-align: left; }
.entry span { grid-column: 2; }
.entry .ico { grid-column: 1; grid-row: 1; }
.entry-sub::after { content: ""; grid-column: 3; width: 0; border: 5px solid transparent; border-left-color: var(--ink); border-right: 0; }
.entry-on { border: 1px solid #9db8ec; border-radius: 3px; padding: 0 5px 0 3px; background: linear-gradient(#e6f0ff, #c6ddfc); color: #39439a; }
.rule { height: 1px; margin: 2px 4px 1px 28px; border: 0; background: #d3cdb4; }

.mark { position: absolute; border: 5px solid var(--red); pointer-events: none; }
.mark-menu { left: 0; top: -30px; width: 112px; height: 40px; }
.mark-okof { left: -5px; top: 456px; width: 105px; height: 31px; }
.mark-load { left: 536px; top: -2px; width: 157px; height: 36px; z-index: 2; }
.mark-code { left: 19px; top: 16px; width: 111px; height: 37px; }
```
